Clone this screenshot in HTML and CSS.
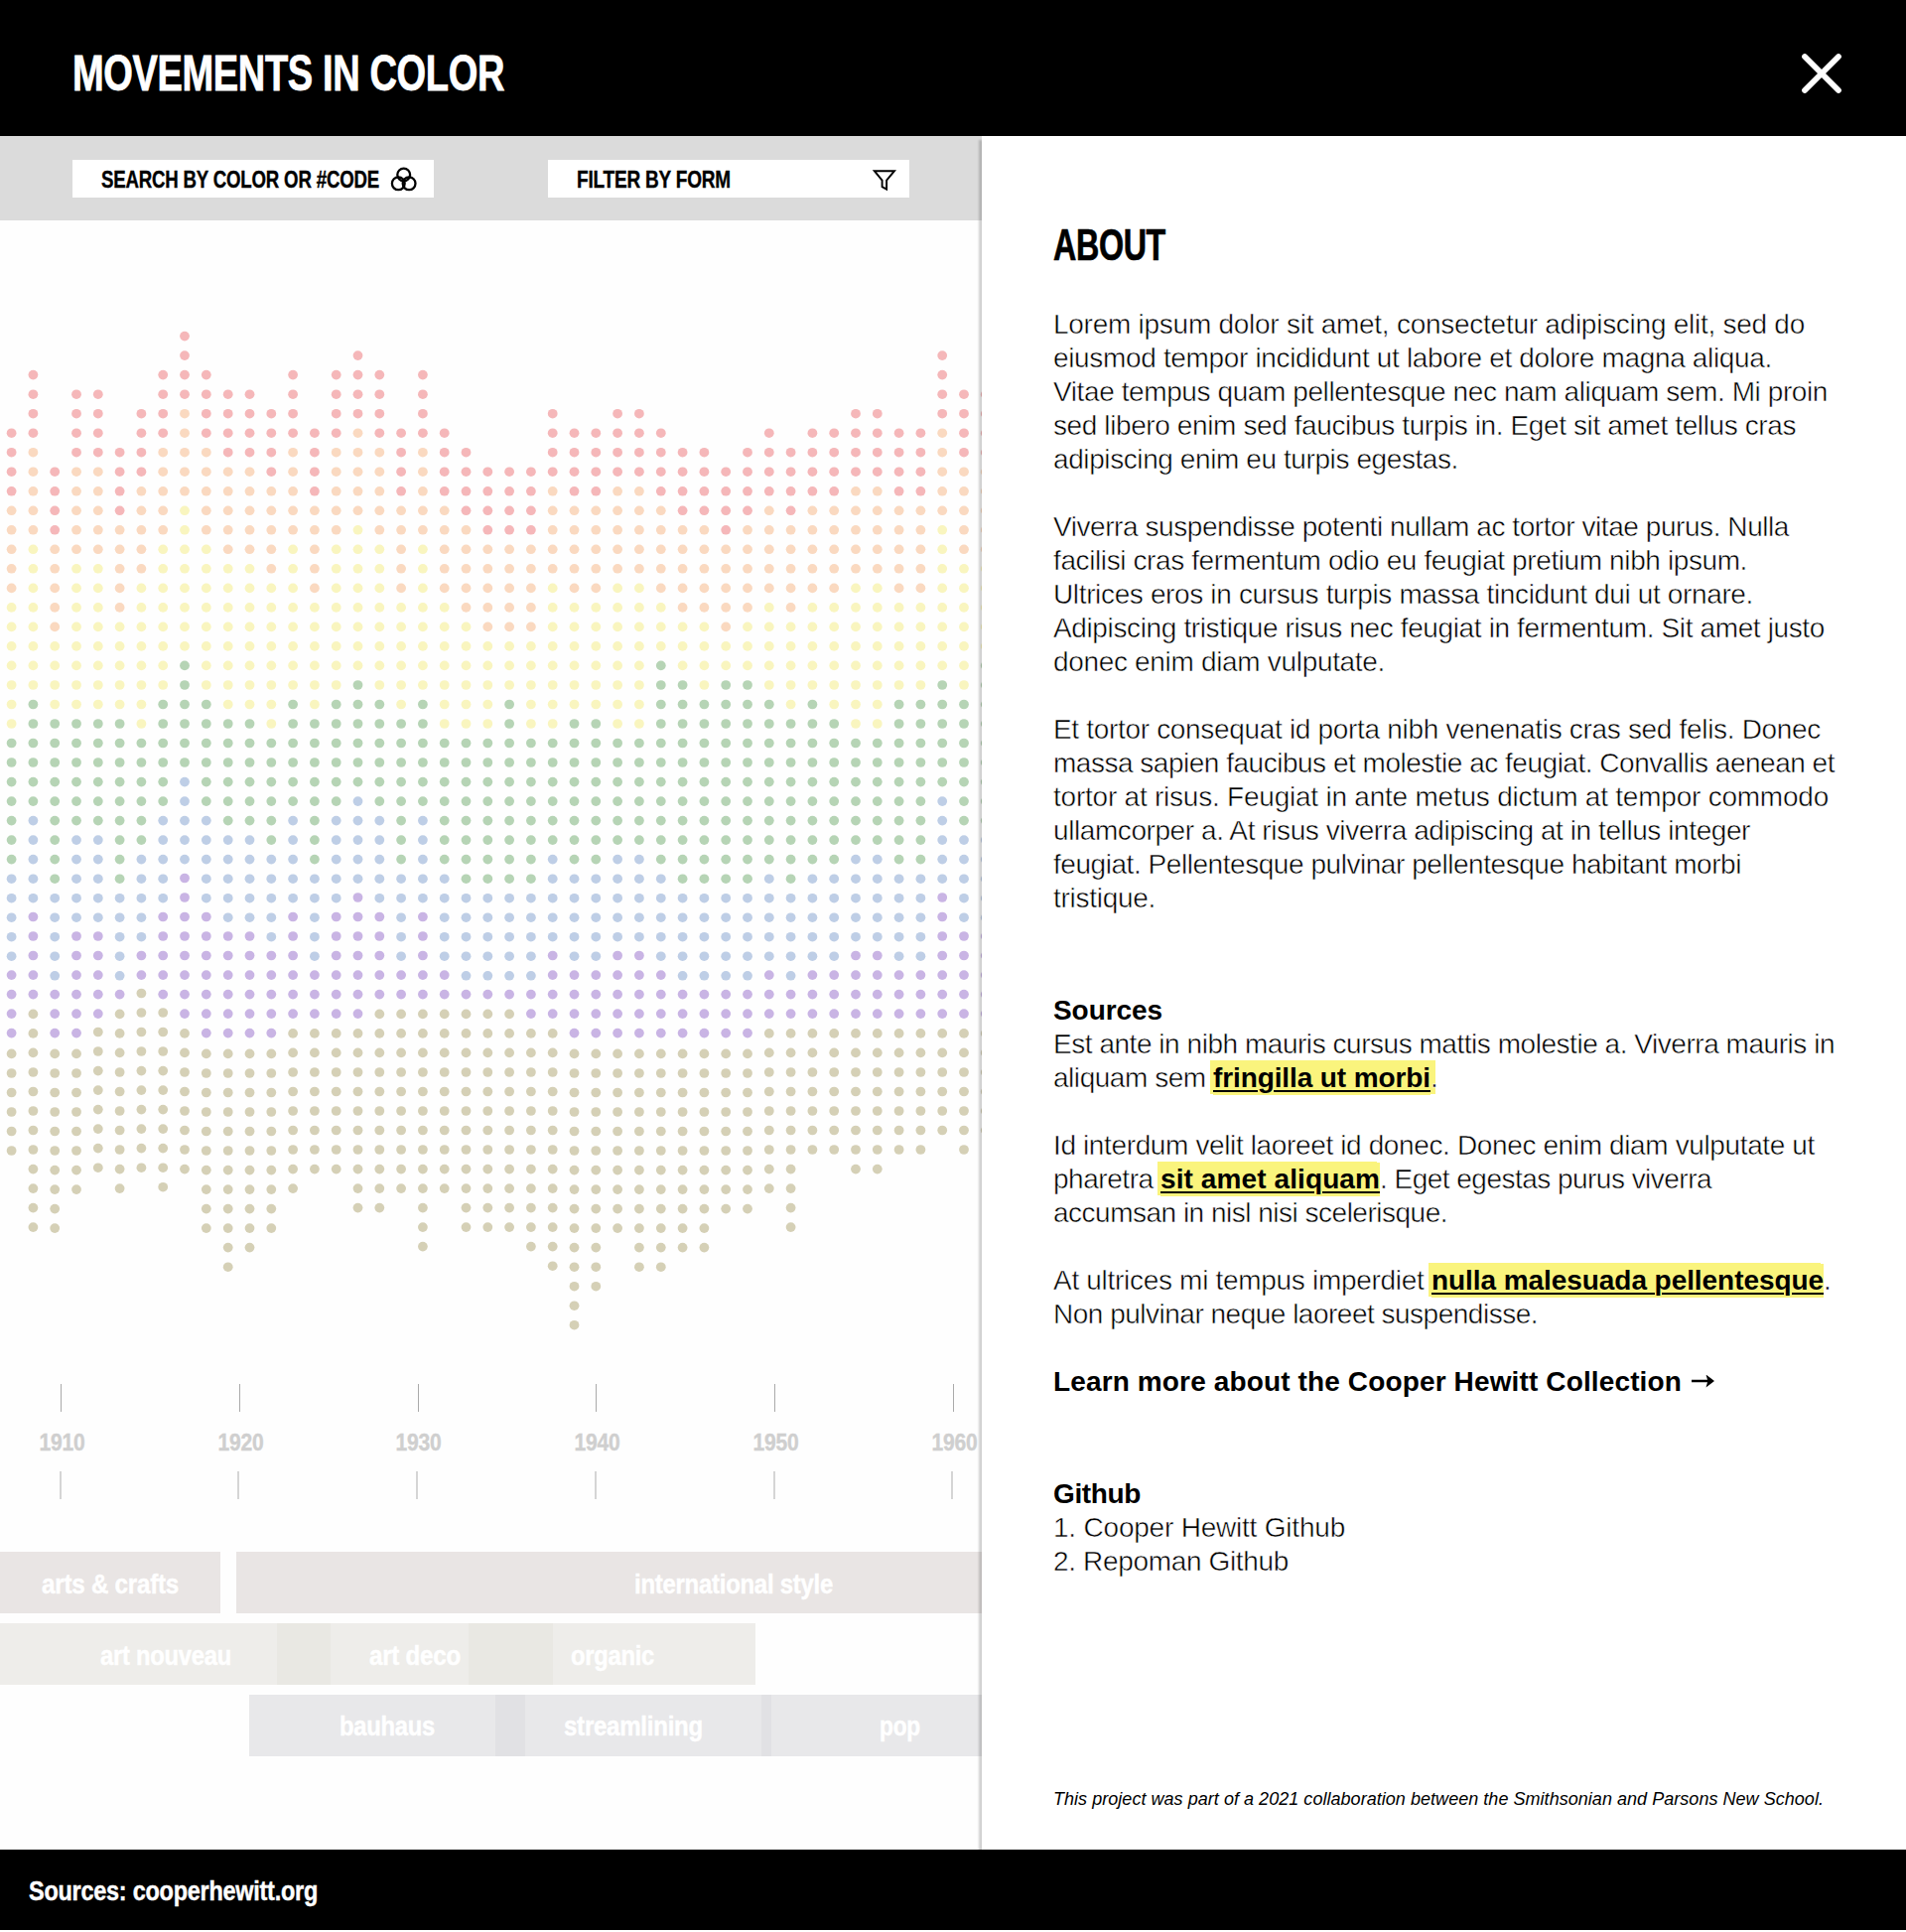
FILE: index.html
```html
<!DOCTYPE html>
<html lang="en">
<head>
<meta charset="utf-8">
<title>Movements in Color</title>
<link rel="stylesheet" href="styles.css">
</head>
<body>
<header class="header">
  <h1 class="title"><span class="cond" data-w="435">MOVEMENTS IN COLOR</span></h1>
  <svg class="close" width="42" height="42" viewBox="0 0 42 42"><path d="M4 4 38 38M38 4 4 38"/></svg>
</header>
<main class="main">
  <section class="timeline">
    <div class="toolbar">
      <div class="field"><span class="cond" data-w="280">SEARCH BY COLOR OR #CODE</span>
        <svg class="icon" width="28" height="28" viewBox="0 0 28 28"><circle cx="13.7" cy="9" r="6.4"/><circle cx="8.3" cy="17.8" r="6.4"/><circle cx="19.1" cy="17.8" r="6.4"/></svg>
      </div>
      <div class="field"><span class="cond" data-w="155">FILTER BY FORM</span>
        <svg class="icon funnel" width="28" height="28" viewBox="0 0 28 28"><path d="M3.8 5.2H24L16.1 14.6V23.6L11.6 21.2V14.6Z"/></svg>
      </div>
    </div>
    <svg class="chart" id="chart" width="989" height="1172" viewBox="0 222 989 1172"></svg>
    <div class="axis">
      <div class="year"><i class="tick"></i><b class="cond center" data-w="46">1910</b><i class="tick low"></i></div>
      <div class="year"><i class="tick"></i><b class="cond center" data-w="46">1920</b><i class="tick low"></i></div>
      <div class="year"><i class="tick"></i><b class="cond center" data-w="46">1930</b><i class="tick low"></i></div>
      <div class="year"><i class="tick"></i><b class="cond center" data-w="46">1940</b><i class="tick low"></i></div>
      <div class="year"><i class="tick"></i><b class="cond center" data-w="46">1950</b><i class="tick low"></i></div>
      <div class="year"><i class="tick"></i><b class="cond center" data-w="46">1960</b><i class="tick low"></i></div>
    </div>
    <div class="bars">
      <div class="row warm">
        <div class="seg" style="width:222px;padding-left:42px"><span class="cond" data-w="138">arts &amp; crafts</span></div>
        <div class="gap" style="width:16px"></div>
        <div class="seg" style="width:751px;padding-left:401px"><span class="cond" data-w="200">international style</span></div>
      </div>
      <div class="row olive">
        <div class="seg" style="width:279px;padding-left:101px"><span class="cond" data-w="132">art nouveau</span></div>
        <div class="seg over" style="width:54px"></div>
        <div class="seg" style="width:139px;padding-left:39px"><span class="cond" data-w="92">art deco</span></div>
        <div class="seg over" style="width:85px"></div>
        <div class="seg" style="width:204px;padding-left:18px"><span class="cond" data-w="84">organic</span></div>
      </div>
      <div class="row cool">
        <div class="gap" style="width:251px"></div>
        <div class="seg" style="width:248px;padding-left:91px"><span class="cond" data-w="96">bauhaus</span></div>
        <div class="seg over" style="width:30px"></div>
        <div class="seg" style="width:238px;padding-left:39px"><span class="cond" data-w="140">streamlining</span></div>
        <div class="seg over" style="width:10px"></div>
        <div class="seg" style="width:212px;padding-left:109px"><span class="cond" data-w="41">pop</span></div>
      </div>
    </div>
  </section>
  <aside class="panel">
    <h2 class="about"><span class="cond" data-w="113">ABOUT</span></h2>
    <div class="copy">
      <p><span class="ln" data-w="757">Lorem ipsum dolor sit amet, consectetur adipiscing elit, sed do</span>
      <span class="ln" data-w="724">eiusmod tempor incididunt ut labore et dolore magna aliqua.</span>
      <span class="ln" data-w="780">Vitae tempus quam pellentesque nec nam aliquam sem. Mi proin</span>
      <span class="ln" data-w="748">sed libero enim sed faucibus turpis in. Eget sit amet tellus cras</span>
      <span class="ln" data-w="408">adipiscing enim eu turpis egestas.</span></p>
      <p><span class="ln" data-w="741">Viverra suspendisse potenti nullam ac tortor vitae purus. Nulla</span>
      <span class="ln" data-w="699">facilisi cras fermentum odio eu feugiat pretium nibh ipsum.</span>
      <span class="ln" data-w="705">Ultrices eros in cursus turpis massa tincidunt dui ut ornare.</span>
      <span class="ln" data-w="777">Adipiscing tristique risus nec feugiat in fermentum. Sit amet justo</span>
      <span class="ln" data-w="334">donec enim diam vulputate.</span></p>
      <p><span class="ln" data-w="773">Et tortor consequat id porta nibh venenatis cras sed felis. Donec</span>
      <span class="ln" data-w="787">massa sapien faucibus et molestie ac feugiat. Convallis aenean et</span>
      <span class="ln" data-w="781">tortor at risus. Feugiat in ante metus dictum at tempor commodo</span>
      <span class="ln" data-w="702">ullamcorper a. At risus viverra adipiscing at in tellus integer</span>
      <span class="ln" data-w="693">feugiat. Pellentesque pulvinar pellentesque habitant morbi</span>
      <span class="ln" data-w="103">tristique.</span></p>
    </div>
    <div class="copy sources">
      <h3><span class="ln" data-w="110">Sources</span></h3>
      <p><span class="ln" data-w="787">Est ante in nibh mauris cursus mattis molestie a. Viverra mauris in</span>
      <span class="ln"><span class="pre" data-w="161">aliquam sem </span><a class="mark wide" data-w="219">fringilla ut morbi</a>.</span></p>
      <p><span class="ln" data-w="767">Id interdum velit laoreet id donec. Donec enim diam vulputate ut</span>
      <span class="ln"><span class="pre" data-w="108">pharetra </span><a class="mark" data-w="221">sit amet aliquam</a><span class="pre" data-w="334">. Eget egestas purus viverra</span></span>
      <span class="ln" data-w="397">accumsan in nisl nisi scelerisque.</span></p>
      <p><span class="ln"><span class="pre" data-w="381">At ultrices mi tempus imperdiet </span><a class="mark" data-w="395">nulla malesuada pellentesque</a>.</span>
      <span class="ln" data-w="488">Non pulvinar neque laoreet suspendisse.</span></p>
      <h3 class="more"><span class="ln" data-w="633">Learn more about the Cooper Hewitt Collection</span><svg width="24" height="14" viewBox="0 0 24 14"><path d="M0 4.8H16L14.5 -.5 23 6 14.5 12.5 16 7.2H0Z"/></svg></h3>
    </div>
    <div class="copy github">
      <h3><span class="ln" data-w="88">Github</span></h3>
      <span class="ln" data-w="294">1. Cooper Hewitt Github</span>
      <span class="ln" data-w="237">2. Repoman Github</span>
    </div>
    <p class="note"><span class="ln" data-w="776">This project was part of a 2021 collaboration between the Smithsonian and Parsons New School.</span></p>
  </aside>
</main>
<footer class="footer"><span class="cond" data-w="291">Sources: cooperhewitt.org</span></footer>
<script src="app.js"></script>
</body>
</html>
```
FILE: styles.css
```css
* { box-sizing: border-box; }
body {
  margin: 0;
  width: 1920px;
  height: 1946px;
  background: #fff;
  color: #000;
  font-family: "Liberation Sans", Arial, sans-serif;
  overflow: hidden;
}
h1, h2, h3, p { margin: 0; font-weight: inherit; font-size: inherit; }

.cond {
  display: inline-block;
  font-family: "Liberation Sans Narrow", "Liberation Sans", sans-serif;
  font-weight: 700;
  white-space: nowrap;
  letter-spacing: -.01em;
  -webkit-text-stroke: .016em currentColor;
  transform-origin: 0 50%;
}
.cond.center { transform-origin: 50% 50%; }

.header {
  display: flex;
  justify-content: space-between;
  align-items: center;
  height: 137px;
  padding: 0 64px 0 73px;
  background: #000;
  color: #fff;
}
.title { font-size: 50px; line-height: 58px; padding-top: 10px; }
.close { margin-top: 10px; fill: none; stroke: #fff; stroke-width: 5.8; stroke-linecap: round; }

.main { display: flex; height: 1726px; }
.timeline { width: 989px; overflow: hidden; background: #fefefe; }

.toolbar { display: flex; gap: 115px; height: 85px; padding: 24px 73px; background: #dbdbdb; }
.field {
  display: flex;
  justify-content: space-between;
  align-items: center;
  width: 364px;
  height: 38px;
  padding: 1px 16px 0 29px;
  background: #fff;
  font-size: 24.5px;
  line-height: 36px;
}
.field .cond { width: 0; padding-top: 1px; }
.icon { fill: none; stroke: #000; stroke-width: 2.3; }
.funnel { margin-right: -5px; stroke-width: 1.9; }

.chart { display: block; }
.red { fill: #f5b7b9; }
.orange { fill: #fad9c0; }
.yellow { fill: #f9f5bf; }
.green { fill: #b6d4b5; }
.blue { fill: #becee6; }
.purple { fill: #c9b4e4; }
.tan { fill: #d5d0b6; }

.axis { display: flex; width: 1080px; margin-left: -28.4px; }
.year { display: flex; flex: 0 0 179.8px; flex-direction: column; align-items: center; height: 169px; color: #cfcfcf; }
.tick { width: 1px; height: 28px; background: #aaa; }
.tick.low { width: 2px; margin-left: -2px; background: #d5d5d5; }
.year .cond { height: 60px; padding-left: 2px; font-size: 23.5px; line-height: 62px; }

.bars { display: flex; flex-direction: column; gap: 10px; }
.row { display: flex; height: 62px; font-size: 28.5px; line-height: 65px; color: #fff; }
.seg { flex: none; }
.warm .seg { background: #e9e5e4; }
.olive .seg { background: #eeedea; }
.olive .over { background: #e9e8e3; }
.cool .seg { background: #e8e8ea; }
.cool .over { background: #e1e1e4; }
.cool { line-height: 62px; }

.panel {
  position: relative;
  flex: 1;
  padding: 85px 0 0 72px;
  background: #fff;
  box-shadow: -3.5px 4px 2px rgba(0, 0, 0, .18);
  clip-path: inset(0 0 0 -8px);
}
.about { height: 88px; font-size: 43.5px; line-height: 51px; }
.copy { font-size: 28px; line-height: 34px; -webkit-text-stroke: .5px #fff; }
.copy p + p { margin-top: 34px; }
.ln { display: block; width: max-content; white-space: pre; }
.pre { display: inline-block; white-space: pre; }
.sources, .github { margin-top: 79px; line-height: 34px; }
.copy h3, .mark { font-weight: 700; -webkit-text-stroke: 0; }
.sources p + p, .sources .more { margin-top: 34px; }
.mark {
  display: inline-block;
  text-decoration: underline;
  text-decoration-thickness: 1.5px;
  text-underline-offset: 3px;
  background: linear-gradient(#faf47d, #faf47d);
  box-shadow: -3px -1px #faf47d;
}
.mark.wide { box-shadow: -3px -1px #faf47d, 5px -1px #faf47d; }
.more { display: flex; align-items: center; gap: 10px; }
.note { margin-top: 210px; font-size: 18px; line-height: 24px; font-style: italic; }

.footer { height: 81px; padding-left: 29px; background: #000; color: #fff; font-size: 28px; line-height: 84px; }
```
FILE: app.js
```js
// One entry per column: first row of red, orange, yellow, green, blue, purple, tan, then the last row.
var columns = [
  [5,9,14,21,28,33,37,42],[2,6,11,19,25,30,35,46],[7,11,16,20,29,34,37,46],[3,7,12,20,26,31,37,44],
  [3,7,12,20,26,31,36,43],[6,10,15,20,29,34,35,44],[4,8,13,21,27,32,34,43],[2,6,11,19,25,30,35,44],
  [0,4,9,17,23,28,36,43],[2,6,11,19,25,30,37,46],[3,7,12,20,26,31,37,48],[3,7,12,20,26,31,37,47],
  [4,8,13,21,27,32,37,46],[2,6,11,19,25,30,36,44],[5,9,14,20,28,33,36,43],[2,6,11,19,25,30,36,43],
  [1,5,10,18,24,29,36,45],[2,6,11,19,25,30,35,45],[5,9,14,20,28,33,35,44],[2,6,11,19,25,30,35,47],
  [5,9,14,21,28,33,35,44],[6,10,15,21,29,34,35,46],[7,11,16,21,29,34,35,46],[7,11,16,19,29,34,35,46],
  [7,11,16,21,29,34,36,47],[4,8,13,21,27,32,36,48],[5,9,14,20,28,33,37,51],[5,9,14,20,28,33,37,49],
  [4,8,13,21,27,32,37,46],[4,8,13,21,27,32,37,48],[5,9,14,17,28,33,37,48],[6,10,15,18,29,34,37,47],
  [6,10,15,19,29,34,37,47],[7,11,16,18,29,34,37,45],[6,10,15,18,29,34,37,45],[5,9,14,19,28,33,36,44],
  [6,10,15,20,29,34,36,46],[5,9,14,19,28,33,36,42],[5,9,14,20,28,33,36,42],[4,8,13,21,27,32,36,43],
  [4,8,13,21,27,32,36,43],[5,9,14,19,28,33,36,42],[5,9,14,19,28,33,36,42],[1,5,10,18,24,29,36,41],
  [3,7,12,19,26,31,36,42],[3,7,12,17,26,31,36,41]
];
var names = ['red', 'orange', 'yellow', 'green', 'blue', 'purple', 'tan'];
var raised = { 4: 1, 6: 1, 7: 1 };
var dots = '';
columns.forEach(function (c, i) {
  var x = 11.6 + 21.805 * i;
  for (var row = c[0]; row <= c[7]; row++) {
    var k = 6;
    while (row < c[k]) k--;
    var y = 338.6 + 19.52 * row;
    if (k === 5) y -= 0.7;
    if (k === 6) y += raised[i] ? -1.8 : c[6] === 37 ? 0.6 : -0.4;
    dots += '<ellipse class="' + names[k] + '" cx="' + x.toFixed(1) + '" cy="' + y.toFixed(1) + '" rx="4.9" ry="4.8"/>';
  }
});
document.getElementById('chart').innerHTML = dots;

// Fit text to its measure: condensed labels by horizontal scale, running copy by tracking.
document.querySelectorAll('.cond[data-w]').forEach(function (el) {
  var range = document.createRange();
  range.selectNodeContents(el);
  el.style.transform = 'scaleX(' + (el.dataset.w / range.getBoundingClientRect().width) + ')';
});
document.querySelectorAll('.ln[data-w], .pre[data-w], .mark[data-w]').forEach(function (el) {
  var diff = el.dataset.w - el.getBoundingClientRect().width;
  el.style.letterSpacing = (diff / el.textContent.length) + 'px';
});
```
